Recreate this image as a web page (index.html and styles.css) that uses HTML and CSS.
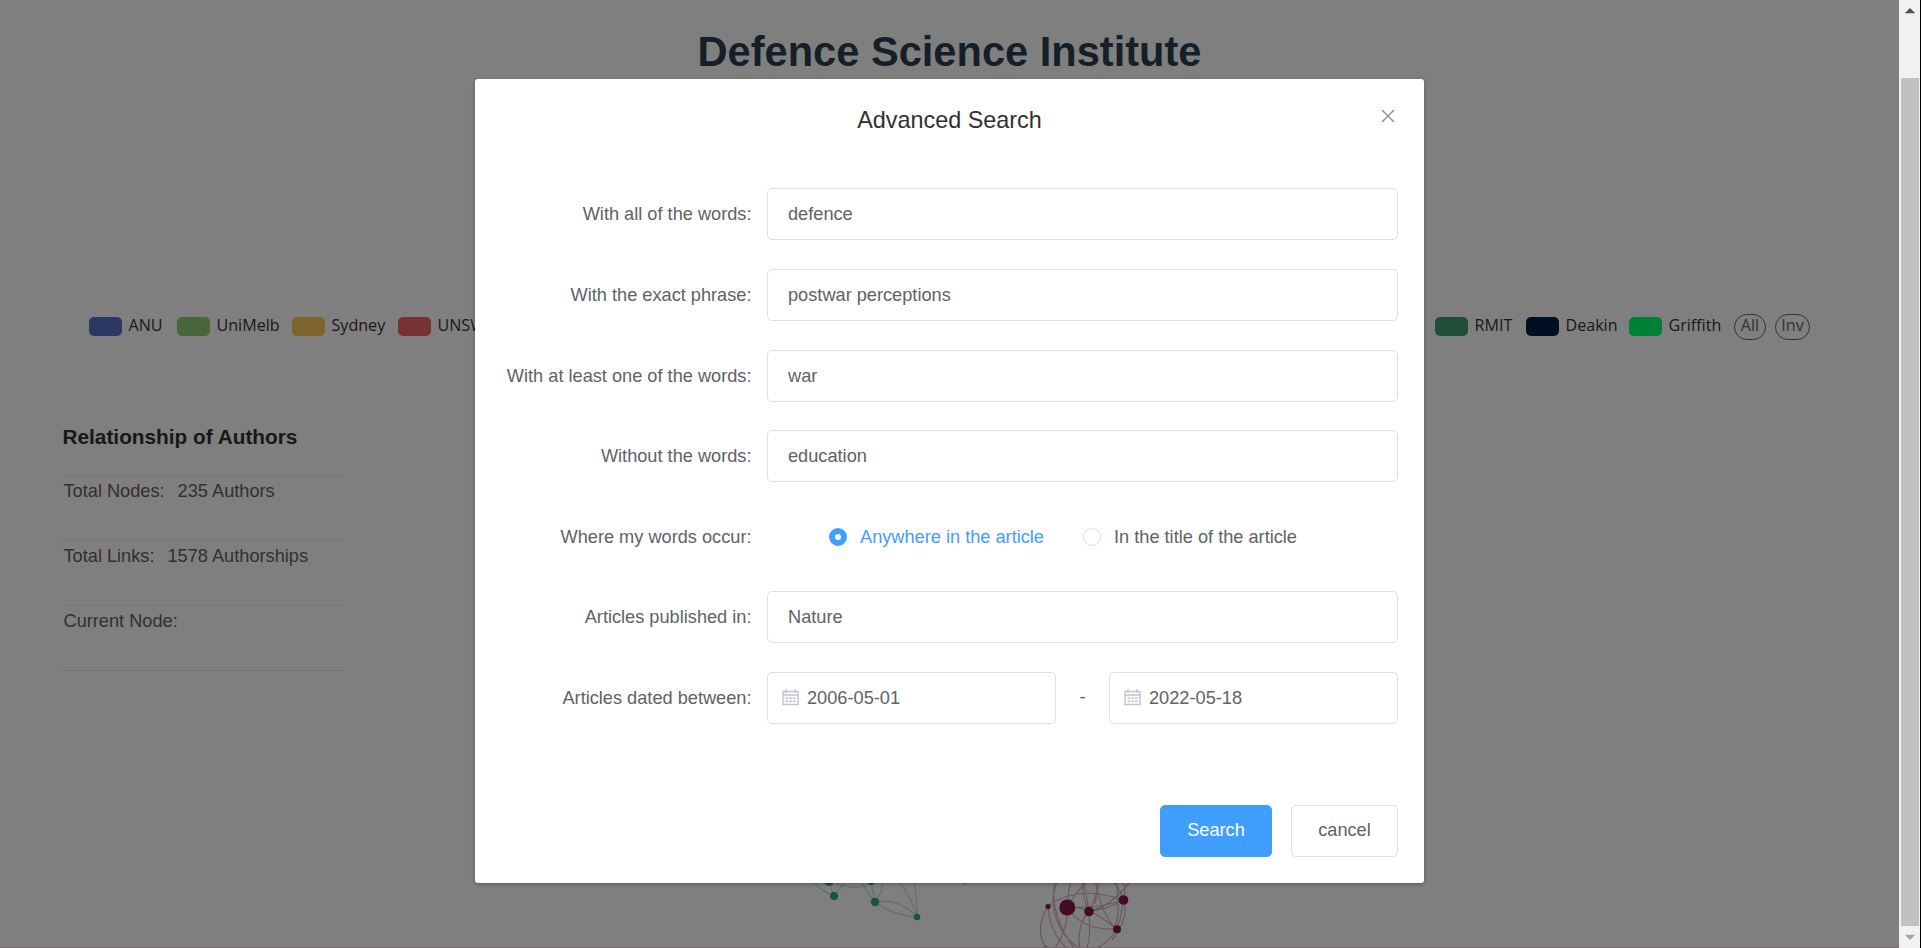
FILE: index.html
```html
<!DOCTYPE html>
<html lang="en">
<head>
<meta charset="utf-8">
<title>Defence Science Institute</title>
<link rel="stylesheet" href="styles.css">
</head>
<body>
<div class="page">
  <h1 class="site-title">Defence Science Institute</h1>
  <div class="legend">
    <div class="legend-group">
      <div class="legend-item w-anu"><i class="swatch anu"></i>ANU</div>
      <div class="legend-item w-uni"><i class="swatch unimelb"></i>UniMelb</div>
      <div class="legend-item w-syd"><i class="swatch sydney"></i>Sydney</div>
      <div class="legend-item"><i class="swatch unsw"></i>UNSW</div>
    </div>
    <div class="legend-group">
      <div class="legend-item w-rmit"><i class="swatch rmit"></i>RMIT</div>
      <div class="legend-item w-dea"><i class="swatch deakin"></i>Deakin</div>
      <div class="legend-item w-gri"><i class="swatch griffith"></i>Griffith</div>
      <span class="pill all">All</span>
      <span class="pill inv">Inv</span>
    </div>
  </div>
  <aside class="stats">
    <h2>Relationship of Authors</h2>
    <div class="stat"><span>Total Nodes:</span><span>235 Authors</span></div>
    <div class="stat"><span>Total Links:</span><span>1578 Authorships</span></div>
    <div class="stat"><span>Current Node:</span></div>
  </aside>
  <svg class="graph" viewBox="780 868 400 80" width="400" height="80">
    <g fill="none" stroke="#3ba272" stroke-opacity=".32" stroke-width="1.2">
      <path d="M812 880Q822 892 834 896M829 882L834 896L845 882M871 882Q873 894 875 902M862 883Q868 894 875 902M883 882Q882 894 875 902M900 883Q914 902 917 917M914 883Q918 902 917 917M875 902Q900 898 917 917M875 902Q892 915 917 917M835 883Q852 890 867 886"/>
    </g>
    <g fill="#3ba272"><circle cx="829" cy="881" r="5"/><circle cx="834" cy="896" r="4"/><circle cx="871" cy="881" r="4"/><circle cx="875" cy="902" r="4.2"/><circle cx="917" cy="917" r="3.3"/></g>
    <circle cx="965" cy="881" r="3" fill="#c2405f" opacity=".6"/>
    <g fill="none" stroke="#8a1550" stroke-opacity=".34" stroke-width="1.2">
      <path d="M1055 880Q1049 914 1074 948M1058 880Q1053 890 1053 904M1071 880Q1068 892 1067 907M1091 878Q1076 891 1067 907M1083 880Q1081 894 1089 911M1099 878Q1098 895 1089 911M1112 880Q1120 888 1123 900M1122 880Q1127 890 1123 900M1130 882Q1109 908 1089 911M1048 906Q1078 884 1123 900M1067 907Q1079 907 1089 911M1067 907Q1099 909 1123 900M1089 911Q1108 910 1123 900M1067 907Q1082 931 1117 929M1089 911Q1102 917 1117 929M1123 900Q1122 915 1117 929Q1107 944 1093 950M1125 904Q1127 922 1112 940M1048 906Q1034 929 1046 948M1048 906Q1050 934 1067 948M1053 904Q1057 934 1079 948M1067 907Q1069 927 1055 948M1089 911Q1076 926 1080 950M1083 880Q1094 925 1087 948M1099 880L1095 904M1116 880Q1121 916 1114 929M1095 880Q1102 917 1117 929"/>
    </g>
    <g fill="#8a1550"><circle cx="1048" cy="906.5" r="2.6"/><circle cx="1067.3" cy="907.5" r="8"/><circle cx="1089" cy="911.5" r="4.8"/><circle cx="1123.5" cy="900" r="4.8"/><circle cx="1117" cy="929.3" r="4"/><circle cx="1046" cy="950" r="3.5"/></g>
  </svg>
</div>
<div class="scrollbar">
  <svg class="arrow" viewBox="0 0 22 22" width="21" height="21"><path d="M6 14h11L11.5 8.5z" fill="#505050"/></svg>
  <div class="thumb"></div>
  <svg class="arrow" viewBox="0 0 22 22" width="21" height="21"><path d="M6 8h11L11.5 13.5z" fill="#a3a3a3"/></svg>
</div>
<div class="overlay">
  <div class="dialog">
    <header class="dialog-head">Advanced Search
      <svg class="close" viewBox="0 0 14 14" width="14" height="14"><path d="M1 1L13 13M13 1L1 13" stroke="#909399" stroke-width="1.5" fill="none"/></svg>
    </header>
    <form class="form">
      <div class="row"><label>With all of the words:</label><div class="input">defence</div></div>
      <div class="row"><label>With the exact phrase:</label><div class="input">postwar perceptions</div></div>
      <div class="row"><label>With at least one of the words:</label><div class="input">war</div></div>
      <div class="row"><label>Without the words:</label><div class="input">education</div></div>
      <div class="row"><label>Where my words occur:</label>
        <div class="radios">
          <span class="radio checked"><i></i>Anywhere in the article</span>
          <span class="radio"><i></i>In the title of the article</span>
        </div>
      </div>
      <div class="row"><label>Articles published in:</label><div class="input">Nature</div></div>
      <div class="row"><label>Articles dated between:</label>
        <div class="dates">
          <div class="input date"><svg viewBox="0 0 17 17" width="17" height="17"><path d="M1 2.500H16V15.500H1zM1 6H16M4 0V4M13 0V4" fill="none" stroke="#c0c4cc" stroke-width="1.4"/><path d="M3.500 9.200H13.500M3.500 12.300H13.500" stroke="#c0c4cc" stroke-width="1.5" stroke-dasharray="2.600 1.100"/></svg>2006-05-01</div>
          <span>-</span>
          <div class="input date"><svg viewBox="0 0 17 17" width="17" height="17"><path d="M1 2.500H16V15.500H1zM1 6H16M4 0V4M13 0V4" fill="none" stroke="#c0c4cc" stroke-width="1.4"/><path d="M3.500 9.200H13.500M3.500 12.300H13.500" stroke="#c0c4cc" stroke-width="1.5" stroke-dasharray="2.600 1.100"/></svg>2022-05-18</div>
        </div>
      </div>
    </form>
    <footer class="actions"><span class="btn primary">Search</span><span class="btn">cancel</span></footer>
  </div>
</div>
</body>
</html>
```

FILE: styles.css
```css
* { box-sizing: border-box; }
body {
  margin: 0;
  height: 948px;
  display: flex;
  position: relative;
  overflow: hidden;
  background: #fff;
  font: 18.2px "Liberation Sans", Arial, sans-serif;
  color: #606266;
}
.page { width: 1899px; height: 948px; position: relative; overflow: hidden; border-bottom: 1px solid #e8d4dc; }
.site-title { margin: 0; padding-top: 27px; height: 313px; text-align: center; font-size: 41.6px; line-height: 50px; color: #2c3e50; }

.legend { display: flex; justify-content: space-between; height: 27px; padding: 0 89px; font: 16.1px/26px "Open Sans", "Noto Sans", sans-serif; color: #333; }
.legend-group { display: flex; align-items: center; }
.legend-item { display: flex; align-items: center; gap: 6.5px; white-space: nowrap; line-height: 22px; padding-bottom: 4px; }
.swatch { width: 33px; height: 19px; border-radius: 5px; position: relative; top: 2px; }
.w-anu { width: 88px; }
.w-uni { width: 115px; }
.w-syd { width: 106px; }
.w-rmit { width: 91px; }
.w-dea { width: 103px; }
.w-gri { width: 105px; }
.anu { background: #5470c6; }
.unimelb { background: #91cc75; }
.sydney { background: #fac858; }
.unsw { background: #ee6666; }
.rmit { background: #459c73; }
.deakin { background: #002147; }
.griffith { background: #00ff6e; }
.pill { height: 26px; border: 1px solid #666; border-radius: 13px; text-align: center; line-height: 21px; color: #666; }
.all { width: 32px; margin-right: 9px; }
.inv { width: 35px; }

.stats { margin: 77px 0 0 62px; width: 282px; }
.stats h2 { margin: 0; padding: 8px 0 0 0.5px; height: 58px; font-size: 20.8px; line-height: 24px; color: #303133; }
.stat { height: 65px; border-top: 1px solid #ebeef5; padding: 5px 0 0 1.5px; line-height: 21px; display: flex; gap: 13px; }
.stat:nth-child(odd) { border-color: #d9ecff; }
.stat:last-child { border-bottom: 1px solid #d9ecff; height: 66px; }
.graph { position: absolute; left: 780px; top: 868px; }

.scrollbar { width: 22px; height: 948px; background: #f1f1f1; border-right: 1px solid #000; display: flex; flex-direction: column; }
.thumb { flex: 1; margin: 57px 1px 1px 2px; background: #c1c1c1; }
.arrow { display: block; }

.overlay { position: absolute; left: 0; top: 0; width: 1899px; height: 948px; padding-top: 79px; background: rgba(0, 0, 0, .5); }
.dialog { width: 949px; height: 804px; margin: 0 auto; background: #fff; border-radius: 3px; box-shadow: 0 1px 4px rgba(0, 0, 0, .3); }
.dialog-head { height: 109.4px; padding-top: 26px; text-align: center; font-size: 23.4px; line-height: 30px; color: #303133; position: relative; }
.close { position: absolute; right: 29px; top: 30px; }
.form { padding: 0 26px; display: flex; flex-direction: column; gap: 28.6px; }
.row { display: flex; height: 52px; align-items: center; }
.row label { width: 266px; padding: 1px 15.5px 0 0; text-align: right; white-space: nowrap; }
.input { flex: 1; height: 52px; border: 1px solid #dcdfe6; border-radius: 5px; padding: 0 20px; line-height: 51px; }
.radios { display: flex; gap: 39px; padding-left: 62px; }
.radio { display: flex; align-items: center; gap: 13px; line-height: 20px; }
.radio i { width: 18px; height: 18px; border: 1px solid #dcdfe6; border-radius: 50%; }
.checked { color: #409eff; }
.checked i { border: 6px solid #409eff; }
.dates { flex: 1; display: flex; align-items: center; }
.dates > span { width: 53px; text-align: center; }
.date { display: flex; align-items: center; padding: 0 13.5px; gap: 8.5px; line-height: 50px; }
.actions { display: flex; justify-content: flex-end; gap: 19px; padding: 81px 26px 0; }
.btn { height: 52px; width: 107px; border: 1px solid #dcdfe6; border-radius: 5px; text-align: center; line-height: 49px; }
.primary { width: 112px; background: #409eff; border-color: #409eff; color: #fff; }
```
